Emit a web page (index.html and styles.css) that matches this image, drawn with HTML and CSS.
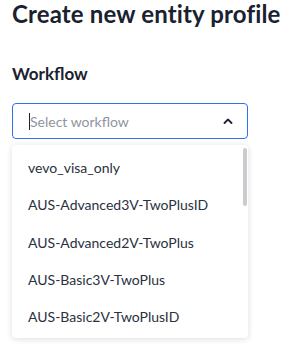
FILE: index.html
```html
<html>
<head>
<link rel="stylesheet" href="styles.css">
</head>
<body>
<div class="page">
  <h1 class="title">Create new entity profile</h1>

  <label class="field-label">Workflow</label>

  <div class="select-wrap">
    <div class="select-box">
      <span class="caret"></span>
      <span class="placeholder">Select workflow</span>
      <svg class="chevron" width="10" height="6" viewBox="0 0 10 6">
        <path d="M1.5 5 L5 1.5 L8.5 5" fill="none" stroke="#1f2533" stroke-width="1.8" stroke-linecap="round" stroke-linejoin="round"/>
      </svg>
    </div>

    <div class="menu">
      <div class="scrollbar"></div>
      <div class="option">vevo_visa_only</div>
      <div class="option">AUS-Advanced3V-TwoPlusID</div>
      <div class="option">AUS-Advanced2V-TwoPlus</div>
      <div class="option">AUS-Basic3V-TwoPlus</div>
      <div class="option">AUS-Basic2V-TwoPlusID</div>
    </div>
  </div>
</div>
</body>
</html>
```

FILE: styles.css
```css
body {
  margin: 0;
  background: #ffffff;
  font-family: Lato, "Open Sans", sans-serif;
  color: #1f2533;
}
.page {
  padding: 0 12px;
}
.title {
  margin: 0;
  font-size: 24px;
  font-weight: 700;
  line-height: 28px;
  letter-spacing: 0.15px;
  white-space: nowrap;
  color: #1a2130;
}
.field-label {
  display: block;
  margin-top: 35px;
  font-size: 17px;
  font-weight: 700;
  line-height: 22px;
  color: #1a2130;
}
.select-wrap {
  position: relative;
  width: 236px;
  margin-top: 18px;
}
.select-box {
  display: flex;
  align-items: center;
  height: 36px;
  box-sizing: border-box;
  border: 1px solid #2f6ff0;
  border-radius: 4px;
  padding: 0 14px 0 16px;
}
.caret {
  width: 1px;
  height: 17px;
  background: #1a2130;
}
.placeholder {
  flex: 1;
  font-size: 14px;
  color: #8f95a0;
}
.chevron {
  display: block;
}
.menu {
  position: relative;
  margin-top: 6px;
  background: #ffffff;
  border-radius: 4px;
  box-shadow: 0 1px 6px rgba(0, 0, 0, 0.14);
  padding: 4px 0 3px;
}
.option {
  height: 37.3px;
  line-height: 37px;
  padding-left: 16px;
  font-size: 14px;
  color: #2a3140;
}
.scrollbar {
  position: absolute;
  right: 1px;
  top: 3px;
  width: 4px;
  height: 58px;
  border-radius: 2px;
  background: #c9cbcf;
}
```
